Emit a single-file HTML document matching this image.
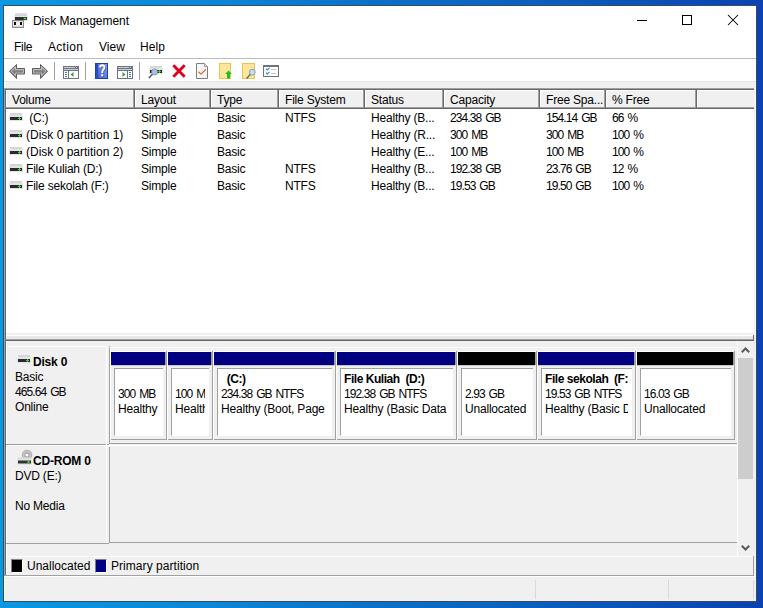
<!DOCTYPE html>
<html><head><meta charset="utf-8">
<style>
html,body{margin:0;padding:0;}
body{width:763px;height:608px;overflow:hidden;position:relative;
 background:linear-gradient(90deg,#0899e2 0%,#0a86d9 28%,#0a70c9 50%,#0a58bb 78%,#0a42b1 100%);
 font-family:"Liberation Sans",sans-serif;font-size:12px;color:#000;}
.a{position:absolute;}
.t{position:absolute;white-space:pre;line-height:15px;letter-spacing:-0.2px;}
.n{letter-spacing:-0.9px;word-spacing:1.4px;}
.b{font-weight:bold;}
.bl{letter-spacing:-0.45px;}
svg{position:absolute;overflow:visible;}
.clip{position:absolute;overflow:hidden;}
</style></head><body>
<div class="a" style="left:3px;top:5px;width:752px;height:595px;border:1px solid rgba(12,32,60,0.8);background:#f0f0f0;"></div>
<div class="a" style="left:4px;top:6px;width:752px;height:52px;background:#fff;"></div>
<div class="t" style="left:33px;top:14px;letter-spacing:-0.05px;">Disk Management</div>
<div class="t" style="left:14px;top:40px;letter-spacing:-0.3px;">File</div>
<div class="t" style="left:48px;top:40px;letter-spacing:0.3px;">Action</div>
<div class="t" style="left:99px;top:40px;letter-spacing:0;">View</div>
<div class="t" style="left:140px;top:40px;letter-spacing:0.1px;">Help</div>
<svg style="left:12px;top:13px" width="16" height="15" viewBox="0 0 16 15">
<defs><linearGradient id="gt" x1="0" y1="0" x2="0" y2="1"><stop offset="0" stop-color="#e2e3e6"/><stop offset="1" stop-color="#c9cbcf"/></linearGradient>
<linearGradient id="gb" x1="0" y1="0" x2="0" y2="1"><stop offset="0" stop-color="#d6d6d6"/><stop offset="0.5" stop-color="#f4f4f4"/><stop offset="1" stop-color="#cfcfcf"/></linearGradient></defs>
<rect x="3" y="0" width="12" height="4" rx="1" fill="url(#gt)"/>
<rect x="2" y="3" width="14" height="5" fill="#e4e6ea"/>
<rect x="3" y="4" width="12" height="3" fill="#2e2e2e"/>
<rect x="12" y="5" width="2" height="1" fill="#3cf03c"/><rect x="11.5" y="4.5" width="3" height="2" fill="#3cf03c" opacity="0.45"/>
<rect x="0.5" y="7.5" width="11" height="7" fill="url(#gb)" stroke="#8a8a8a"/>
<rect x="2" y="9" width="2" height="3" fill="#111"/><rect x="8" y="9" width="2" height="3" fill="#111"/>
</svg>
<div class="a" style="left:637px;top:20px;width:10px;height:1px;background:#000;"></div>
<div class="a" style="left:682px;top:15px;width:8px;height:8px;border:1px solid #000;"></div>
<svg style="left:728px;top:15px" width="10" height="10" viewBox="0 0 10 10"><path d="M0 0L10 10M10 0L0 10" stroke="#000" stroke-width="1.05"/></svg>
<div class="a" style="left:4px;top:58px;width:752px;height:1px;background:#bcbcbc;"></div>
<div class="a" style="left:4px;top:59px;width:752px;height:22px;background:#fff;"></div>
<div class="a" style="left:4px;top:81px;width:752px;height:1px;background:#e3e3e3;"></div>
<div class="a" style="left:4px;top:82px;width:1px;height:6px;background:#fff;"></div>
<div class="a" style="left:54px;top:62px;width:1px;height:18px;background:#a0a0a0;"></div>
<div class="a" style="left:85px;top:62px;width:1px;height:18px;background:#a0a0a0;"></div>
<div class="a" style="left:139px;top:62px;width:1px;height:18px;background:#a0a0a0;"></div>
<svg style="left:8px;top:63px" width="18" height="17" viewBox="0 0 18 17">
<defs><linearGradient id="ga" x1="0" y1="0" x2="0" y2="1"><stop offset="0" stop-color="#a8a8a8"/><stop offset="0.6" stop-color="#7c7c7c"/><stop offset="1" stop-color="#9a9a9a"/></linearGradient></defs>
<path d="M1.5 8.2L8.5 1.5V5.5H16.5V11H8.5V15.5Z" fill="url(#ga)" stroke="#5e5e5e" stroke-width="1" stroke-linejoin="round"/>
<path d="M3 8.2L7.5 3.9V6.5H15.5V10H7.5V12.6Z" fill="none" stroke="#e8e8e8" stroke-width="0.7" opacity="0.8"/>
</svg>
<svg style="left:31px;top:63px" width="18" height="17" viewBox="0 0 18 17">
<path d="M16.5 8.2L9.5 1.5V5.5H1.5V11H9.5V15.5Z" fill="url(#ga)" stroke="#5e5e5e" stroke-width="1" stroke-linejoin="round"/>
<path d="M15 8.2L10.5 3.9V6.5H2.5V10H10.5V12.6Z" fill="none" stroke="#e8e8e8" stroke-width="0.7" opacity="0.8"/>
</svg>
<svg style="left:63px;top:66px" width="16" height="13" viewBox="0 0 16 13"><rect x="0.5" y="0.5" width="15" height="12" fill="#fff" stroke="#6d7480"/><rect x="1" y="1" width="14" height="1" fill="#c9ced6"/><rect x="1" y="2" width="14" height="1" fill="#6d7480"/><rect x="1" y="3" width="14" height="1" fill="#c9ced6"/><rect x="1" y="4" width="14" height="1" fill="#6d7480"/><rect x="12" y="1" width="1" height="1" fill="#6d7480"/><rect x="14" y="1" width="1" height="1" fill="#6d7480"/><rect x="5" y="5" width="1" height="7" fill="#6d7480"/><rect x="2" y="6" width="2" height="1" fill="#3b78c8"/><rect x="2" y="8" width="2" height="1" fill="#3b78c8"/><rect x="2" y="10" width="2" height="1" fill="#3b78c8"/><path d="M7.5 8.5L10.5 6V11Z" fill="#2fa52f"/></svg>
<svg style="left:117px;top:66px" width="16" height="13" viewBox="0 0 16 13"><rect x="0.5" y="0.5" width="15" height="12" fill="#fff" stroke="#6d7480"/><rect x="1" y="1" width="14" height="1" fill="#c9ced6"/><rect x="1" y="2" width="14" height="1" fill="#6d7480"/><rect x="1" y="3" width="14" height="1" fill="#c9ced6"/><rect x="1" y="4" width="14" height="1" fill="#6d7480"/><rect x="12" y="1" width="1" height="1" fill="#6d7480"/><rect x="14" y="1" width="1" height="1" fill="#6d7480"/><rect x="10" y="5" width="1" height="7" fill="#6d7480"/><rect x="12" y="6" width="2" height="1" fill="#3b78c8"/><rect x="12" y="8" width="2" height="1" fill="#3b78c8"/><rect x="12" y="10" width="2" height="1" fill="#3b78c8"/><path d="M8.5 8.5L5.5 6V11Z" fill="#2fa52f"/></svg>
<svg style="left:95px;top:63px" width="13" height="16" viewBox="0 0 13 16">
<defs><linearGradient id="gh" x1="1" y1="0" x2="0" y2="1"><stop offset="0" stop-color="#7f9bea"/><stop offset="1" stop-color="#4466cc"/></linearGradient></defs>
<rect x="0" y="0" width="13" height="16" fill="#2140b0"/>
<rect x="3" y="1" width="9" height="14" fill="url(#gh)"/>
<rect x="1" y="1" width="2" height="14" fill="#2a4cc0"/>
<path d="M5.6 5Q5.8 2.8 7.9 2.8Q10.2 2.9 10 5Q9.8 6.6 8.6 7.6Q7.8 8.4 7.8 10.4" fill="none" stroke="#22347a" stroke-width="1.9" opacity="0.55"/>
<path d="M4.9 4.5Q5.2 2.2 7.3 2.2Q9.6 2.3 9.4 4.5Q9.2 6.1 8 7.1Q7.2 7.9 7.2 9.9" fill="none" stroke="#fff" stroke-width="1.9"/>
<rect x="6.8" y="11.8" width="2" height="2" fill="#22347a" opacity="0.55"/>
<rect x="6.1" y="11.2" width="2.1" height="2.1" fill="#fff"/>
</svg>
<svg style="left:148px;top:66px" width="16" height="13" viewBox="0 0 16 13">
<rect x="2" y="0" width="12" height="3" fill="#d6d8dc"/>
<rect x="1" y="2" width="14" height="6" fill="#e2e4e8"/>
<rect x="2" y="4" width="12" height="3" fill="#2a2a2a"/>
<rect x="10" y="5" width="3" height="1" fill="#3ae03a"/><rect x="11" y="4" width="1" height="3" fill="#3ae03a"/>
<circle cx="6.5" cy="6" r="3" fill="#a9c3dc" stroke="#6f8aa3" stroke-width="0.8"/>
<path d="M4.4 8.3L0.8 12" stroke="#4a5a6a" stroke-width="1.6"/>
</svg>
<svg style="left:172px;top:64px" width="14" height="14" viewBox="0 0 14 14">
<path d="M1.3 1.3L12.7 12.7M12.7 1.3L1.3 12.7" stroke="#e0001b" stroke-width="2.9"/>
</svg>
<svg style="left:196px;top:63px" width="12" height="16" viewBox="0 0 12 16">
<path d="M0.5 0.5H8.5L11.5 3.5V15.5H0.5Z" fill="#f6f7f8" stroke="#7d7d7d"/>
<path d="M8.5 0.5V3.5H11.5" fill="#e8e8e8" stroke="#9a9a9a"/>
<path d="M2.5 8.8L5 11.2L10 6.3" fill="none" stroke="#f06a25" stroke-width="1.3"/>
</svg>
<svg style="left:219px;top:63px" width="14" height="16" viewBox="0 0 14 16">
<rect x="0.5" y="0.5" width="11" height="15" fill="#fde69c" stroke="#e8c54c"/>
<path d="M9.5 7.5L13 11H11V15.5H8V11H6Z" fill="#20c020"/>
</svg>
<svg style="left:242px;top:63px" width="14" height="16" viewBox="0 0 14 16">
<rect x="0.5" y="0.5" width="12" height="15" fill="#fde69c" stroke="#e8c54c"/>
<circle cx="10.3" cy="9.2" r="2.9" fill="#c5def0" stroke="#7c96ae" stroke-width="0.9"/>
<path d="M8.2 11.5L4.6 15.5" stroke="#5a6a7a" stroke-width="1.3"/>
</svg>
<svg style="left:263px;top:65px" width="16" height="12" viewBox="0 0 16 12">
<rect x="0.5" y="0.5" width="15" height="11" fill="#fff" stroke="#707478"/>
<rect x="0" y="0" width="16" height="2" fill="#707478"/>
<path d="M3 3.8L4.3 5L6.5 2.8M3 7.8L4.3 9L6.5 6.8" fill="none" stroke="#2f8ae0" stroke-width="1.2"/>
<rect x="8" y="4" width="5" height="1" fill="#c4c4c4"/><rect x="8" y="8" width="5" height="1" fill="#c4c4c4"/>
</svg>
<div class="a" style="left:4px;top:88px;width:752px;height:247px;background:#fff;"></div>
<div class="a" style="left:4px;top:88px;width:751px;height:1px;background:#a0a0a0;"></div>
<div class="a" style="left:5px;top:89px;width:749px;height:1px;background:#696969;"></div>
<div class="a" style="left:6px;top:333px;width:748px;height:1px;background:#f0f0f0;"></div>
<div class="a" style="left:754px;top:89px;width:1px;height:245px;background:#f0f0f0;"></div>
<div class="a" style="left:6px;top:90px;width:748px;height:19px;background:#f0f0f0;"></div>
<div class="a" style="left:6px;top:90px;width:129px;height:19px;border-left:1px solid #fff;border-top:1px solid #fff;box-sizing:border-box;"></div>
<div class="a" style="left:6px;top:107px;width:129px;height:1px;background:#a0a0a0;"></div>
<div class="a" style="left:6px;top:108px;width:129px;height:1px;background:#696969;"></div>
<div class="a" style="left:133px;top:90px;width:1px;height:18px;background:#a0a0a0;"></div>
<div class="a" style="left:134px;top:90px;width:1px;height:19px;background:#696969;"></div>
<div class="t" style="left:12px;top:93px;">Volume</div>
<div class="a" style="left:135px;top:90px;width:76px;height:19px;border-left:1px solid #fff;border-top:1px solid #fff;box-sizing:border-box;"></div>
<div class="a" style="left:135px;top:107px;width:76px;height:1px;background:#a0a0a0;"></div>
<div class="a" style="left:135px;top:108px;width:76px;height:1px;background:#696969;"></div>
<div class="a" style="left:209px;top:90px;width:1px;height:18px;background:#a0a0a0;"></div>
<div class="a" style="left:210px;top:90px;width:1px;height:19px;background:#696969;"></div>
<div class="t" style="left:141px;top:93px;">Layout</div>
<div class="a" style="left:211px;top:90px;width:68px;height:19px;border-left:1px solid #fff;border-top:1px solid #fff;box-sizing:border-box;"></div>
<div class="a" style="left:211px;top:107px;width:68px;height:1px;background:#a0a0a0;"></div>
<div class="a" style="left:211px;top:108px;width:68px;height:1px;background:#696969;"></div>
<div class="a" style="left:277px;top:90px;width:1px;height:18px;background:#a0a0a0;"></div>
<div class="a" style="left:278px;top:90px;width:1px;height:19px;background:#696969;"></div>
<div class="t" style="left:217px;top:93px;">Type</div>
<div class="a" style="left:279px;top:90px;width:86px;height:19px;border-left:1px solid #fff;border-top:1px solid #fff;box-sizing:border-box;"></div>
<div class="a" style="left:279px;top:107px;width:86px;height:1px;background:#a0a0a0;"></div>
<div class="a" style="left:279px;top:108px;width:86px;height:1px;background:#696969;"></div>
<div class="a" style="left:363px;top:90px;width:1px;height:18px;background:#a0a0a0;"></div>
<div class="a" style="left:364px;top:90px;width:1px;height:19px;background:#696969;"></div>
<div class="t" style="left:285px;top:93px;">File System</div>
<div class="a" style="left:365px;top:90px;width:79px;height:19px;border-left:1px solid #fff;border-top:1px solid #fff;box-sizing:border-box;"></div>
<div class="a" style="left:365px;top:107px;width:79px;height:1px;background:#a0a0a0;"></div>
<div class="a" style="left:365px;top:108px;width:79px;height:1px;background:#696969;"></div>
<div class="a" style="left:442px;top:90px;width:1px;height:18px;background:#a0a0a0;"></div>
<div class="a" style="left:443px;top:90px;width:1px;height:19px;background:#696969;"></div>
<div class="t" style="left:371px;top:93px;">Status</div>
<div class="a" style="left:444px;top:90px;width:96px;height:19px;border-left:1px solid #fff;border-top:1px solid #fff;box-sizing:border-box;"></div>
<div class="a" style="left:444px;top:107px;width:96px;height:1px;background:#a0a0a0;"></div>
<div class="a" style="left:444px;top:108px;width:96px;height:1px;background:#696969;"></div>
<div class="a" style="left:538px;top:90px;width:1px;height:18px;background:#a0a0a0;"></div>
<div class="a" style="left:539px;top:90px;width:1px;height:19px;background:#696969;"></div>
<div class="t" style="left:450px;top:93px;">Capacity</div>
<div class="a" style="left:540px;top:90px;width:66px;height:19px;border-left:1px solid #fff;border-top:1px solid #fff;box-sizing:border-box;"></div>
<div class="a" style="left:540px;top:107px;width:66px;height:1px;background:#a0a0a0;"></div>
<div class="a" style="left:540px;top:108px;width:66px;height:1px;background:#696969;"></div>
<div class="a" style="left:604px;top:90px;width:1px;height:18px;background:#a0a0a0;"></div>
<div class="a" style="left:605px;top:90px;width:1px;height:19px;background:#696969;"></div>
<div class="t" style="left:546px;top:93px;">Free Spa...</div>
<div class="a" style="left:606px;top:90px;width:91px;height:19px;border-left:1px solid #fff;border-top:1px solid #fff;box-sizing:border-box;"></div>
<div class="a" style="left:606px;top:107px;width:91px;height:1px;background:#a0a0a0;"></div>
<div class="a" style="left:606px;top:108px;width:91px;height:1px;background:#696969;"></div>
<div class="a" style="left:695px;top:90px;width:1px;height:18px;background:#a0a0a0;"></div>
<div class="a" style="left:696px;top:90px;width:1px;height:19px;background:#696969;"></div>
<div class="t" style="left:612px;top:93px;">% Free</div>
<div class="a" style="left:697px;top:90px;width:57px;height:19px;border-left:1px solid #fff;border-top:1px solid #fff;box-sizing:border-box;"></div>
<div class="a" style="left:697px;top:107px;width:57px;height:1px;background:#a0a0a0;"></div>
<div class="a" style="left:697px;top:108px;width:57px;height:1px;background:#696969;"></div>
<div class="a" style="left:754px;top:88px;width:2px;height:21px;background:#f0f0f0;"></div>
<div class="a" style="left:755px;top:88px;width:1px;height:247px;background:#fff;"></div>
<svg style="left:9px;top:113px" width="14" height="8" viewBox="0 0 14 8">
<rect x="1" y="0" width="12" height="2" fill="#d4d6da"/>
<rect x="0" y="2" width="14" height="6" fill="#e2e4e8"/>
<rect x="1" y="4" width="12" height="3" fill="#2b2b2b"/>
<rect x="9" y="5" width="3" height="1" fill="#36dd36"/><rect x="10" y="4" width="1" height="3" fill="#36dd36"/>
</svg>
<div class="t" style="left:26px;top:111px;"> (C:)</div>
<div class="t" style="left:141px;top:111px;">Simple</div>
<div class="t" style="left:217px;top:111px;">Basic</div>
<div class="t" style="left:285px;top:111px;">NTFS</div>
<div class="t" style="left:371px;top:111px;">Healthy (B...</div>
<div class="t n" style="left:450px;top:111px;">234.38 GB</div>
<div class="t n" style="left:546px;top:111px;">154.14 GB</div>
<div class="t n" style="left:612px;top:111px;">66 %</div>
<svg style="left:9px;top:130px" width="14" height="8" viewBox="0 0 14 8">
<rect x="1" y="0" width="12" height="2" fill="#d4d6da"/>
<rect x="0" y="2" width="14" height="6" fill="#e2e4e8"/>
<rect x="1" y="4" width="12" height="3" fill="#2b2b2b"/>
<rect x="9" y="5" width="3" height="1" fill="#36dd36"/><rect x="10" y="4" width="1" height="3" fill="#36dd36"/>
</svg>
<div class="t" style="left:26px;top:128px;letter-spacing:0;">(Disk 0 partition 1)</div>
<div class="t" style="left:141px;top:128px;">Simple</div>
<div class="t" style="left:217px;top:128px;">Basic</div>
<div class="t" style="left:371px;top:128px;">Healthy (R...</div>
<div class="t n" style="left:450px;top:128px;">300 MB</div>
<div class="t n" style="left:546px;top:128px;">300 MB</div>
<div class="t n" style="left:612px;top:128px;">100 %</div>
<svg style="left:9px;top:147px" width="14" height="8" viewBox="0 0 14 8">
<rect x="1" y="0" width="12" height="2" fill="#d4d6da"/>
<rect x="0" y="2" width="14" height="6" fill="#e2e4e8"/>
<rect x="1" y="4" width="12" height="3" fill="#2b2b2b"/>
<rect x="9" y="5" width="3" height="1" fill="#36dd36"/><rect x="10" y="4" width="1" height="3" fill="#36dd36"/>
</svg>
<div class="t" style="left:26px;top:145px;letter-spacing:0;">(Disk 0 partition 2)</div>
<div class="t" style="left:141px;top:145px;">Simple</div>
<div class="t" style="left:217px;top:145px;">Basic</div>
<div class="t" style="left:371px;top:145px;">Healthy (E...</div>
<div class="t n" style="left:450px;top:145px;">100 MB</div>
<div class="t n" style="left:546px;top:145px;">100 MB</div>
<div class="t n" style="left:612px;top:145px;">100 %</div>
<svg style="left:9px;top:164px" width="14" height="8" viewBox="0 0 14 8">
<rect x="1" y="0" width="12" height="2" fill="#d4d6da"/>
<rect x="0" y="2" width="14" height="6" fill="#e2e4e8"/>
<rect x="1" y="4" width="12" height="3" fill="#2b2b2b"/>
<rect x="9" y="5" width="3" height="1" fill="#36dd36"/><rect x="10" y="4" width="1" height="3" fill="#36dd36"/>
</svg>
<div class="t" style="left:26px;top:162px;">File Kuliah (D:)</div>
<div class="t" style="left:141px;top:162px;">Simple</div>
<div class="t" style="left:217px;top:162px;">Basic</div>
<div class="t" style="left:285px;top:162px;">NTFS</div>
<div class="t" style="left:371px;top:162px;">Healthy (B...</div>
<div class="t n" style="left:450px;top:162px;">192.38 GB</div>
<div class="t n" style="left:546px;top:162px;">23.76 GB</div>
<div class="t n" style="left:612px;top:162px;">12 %</div>
<svg style="left:9px;top:181px" width="14" height="8" viewBox="0 0 14 8">
<rect x="1" y="0" width="12" height="2" fill="#d4d6da"/>
<rect x="0" y="2" width="14" height="6" fill="#e2e4e8"/>
<rect x="1" y="4" width="12" height="3" fill="#2b2b2b"/>
<rect x="9" y="5" width="3" height="1" fill="#36dd36"/><rect x="10" y="4" width="1" height="3" fill="#36dd36"/>
</svg>
<div class="t" style="left:26px;top:179px;">File sekolah (F:)</div>
<div class="t" style="left:141px;top:179px;">Simple</div>
<div class="t" style="left:217px;top:179px;">Basic</div>
<div class="t" style="left:285px;top:179px;">NTFS</div>
<div class="t" style="left:371px;top:179px;">Healthy (B...</div>
<div class="t n" style="left:450px;top:179px;">19.53 GB</div>
<div class="t n" style="left:546px;top:179px;">19.50 GB</div>
<div class="t n" style="left:612px;top:179px;">100 %</div>
<div class="a" style="left:6px;top:333px;width:748px;height:2px;background:#f0f0f0;"></div>
<div class="a" style="left:6px;top:335px;width:748px;height:1px;background:#fff;"></div>
<div class="a" style="left:6px;top:336px;width:748px;height:3px;background:#e8e8e8;"></div>
<div class="a" style="left:6px;top:339px;width:748px;height:1px;background:#a0a0a0;"></div>
<div class="a" style="left:6px;top:340px;width:748px;height:1px;background:#696969;"></div>
<div class="a" style="left:753px;top:335px;width:1px;height:6px;background:#696969;"></div>
<div class="a" style="left:4px;top:88px;width:1px;height:488px;background:#a0a0a0;"></div>
<div class="a" style="left:5px;top:89px;width:1px;height:487px;background:#696969;"></div>
<div class="a" style="left:6px;top:341px;width:748px;height:234px;background:#f0f0f0;"></div>
<div class="a" style="left:6px;top:341px;width:1px;height:235px;background:#fff;"></div>
<div class="a" style="left:6px;top:346px;width:101px;height:1px;background:#fff;"></div>
<div class="a" style="left:106px;top:346px;width:1px;height:98px;background:#fff;"></div>
<div class="a" style="left:109px;top:346px;width:1px;height:1px;background:#a0a0a0;"></div>
<div class="a" style="left:109px;top:348px;width:1px;height:96px;background:#a0a0a0;"></div>
<div class="a" style="left:110px;top:347px;width:628px;height:1px;background:#fff;"></div>
<div class="a" style="left:110px;top:347px;width:1px;height:93px;background:#fff;"></div>
<div class="a" style="left:110px;top:439px;width:625px;height:1px;background:#a0a0a0;"></div>
<div class="a" style="left:6px;top:444px;width:103px;height:1px;background:#a0a0a0;"></div>
<div class="a" style="left:109px;top:443px;width:628px;height:1px;background:#a0a0a0;"></div>
<div class="a" style="left:6px;top:445px;width:731px;height:1px;background:#fff;"></div>
<svg style="left:17px;top:355px" width="14" height="8" viewBox="0 0 14 8">
<rect x="1" y="0" width="12" height="2" fill="#d4d6da"/>
<rect x="0" y="2" width="14" height="6" fill="#e2e4e8"/>
<rect x="1" y="4" width="12" height="3" fill="#2b2b2b"/>
<rect x="9" y="5" width="3" height="1" fill="#36dd36"/><rect x="10" y="4" width="1" height="3" fill="#36dd36"/>
</svg>
<div class="t b" style="left:33px;top:355px;">Disk 0</div>
<div class="t" style="left:15px;top:370px;">Basic</div>
<div class="t n" style="left:15px;top:385px;">465.64 GB</div>
<div class="t" style="left:15px;top:400px;">Online</div>
<div class="a" style="left:110px;top:351px;width:56px;height:1px;background:#fff;"></div>
<div class="a" style="left:110px;top:351px;width:1px;height:89px;background:#fff;"></div>
<div class="a" style="left:111px;top:352px;width:54px;height:13px;background:#000080;"></div>
<div class="a" style="left:165px;top:352px;width:1px;height:13px;background:#a0a0a0;"></div>
<div class="a" style="left:166px;top:351px;width:1px;height:89px;background:#a0a0a0;"></div>
<div class="a" style="left:111px;top:365px;width:54px;height:1px;background:#c8c6be;"></div>
<div class="a" style="left:114px;top:368px;width:49px;height:68px;background:#fff;border-top:1px solid #a0a0a0;border-left:1px solid #a0a0a0;border-bottom:1px solid #fff;box-sizing:border-box;"></div>
<div class="clip" style="left:115px;top:369px;width:44px;height:66px;">
<div class="t n" style="left:3px;top:18px;">300 MB</div>
<div class="t" style="left:3px;top:33px;">Healthy</div>
</div>
<div class="a" style="left:167px;top:351px;width:45px;height:1px;background:#fff;"></div>
<div class="a" style="left:167px;top:351px;width:1px;height:89px;background:#fff;"></div>
<div class="a" style="left:168px;top:352px;width:43px;height:13px;background:#000080;"></div>
<div class="a" style="left:211px;top:352px;width:1px;height:13px;background:#a0a0a0;"></div>
<div class="a" style="left:212px;top:351px;width:1px;height:89px;background:#a0a0a0;"></div>
<div class="a" style="left:168px;top:365px;width:43px;height:1px;background:#c8c6be;"></div>
<div class="a" style="left:171px;top:368px;width:38px;height:68px;background:#fff;border-top:1px solid #a0a0a0;border-left:1px solid #a0a0a0;border-bottom:1px solid #fff;box-sizing:border-box;"></div>
<div class="clip" style="left:172px;top:369px;width:33px;height:66px;">
<div class="t n" style="left:3px;top:18px;">100 MB</div>
<div class="t" style="left:3px;top:33px;">Healthy</div>
</div>
<div class="a" style="left:213px;top:351px;width:122px;height:1px;background:#fff;"></div>
<div class="a" style="left:213px;top:351px;width:1px;height:89px;background:#fff;"></div>
<div class="a" style="left:214px;top:352px;width:120px;height:13px;background:#000080;"></div>
<div class="a" style="left:334px;top:352px;width:1px;height:13px;background:#a0a0a0;"></div>
<div class="a" style="left:335px;top:351px;width:1px;height:89px;background:#a0a0a0;"></div>
<div class="a" style="left:214px;top:365px;width:120px;height:1px;background:#c8c6be;"></div>
<div class="a" style="left:217px;top:368px;width:115px;height:68px;background:#fff;border-top:1px solid #a0a0a0;border-left:1px solid #a0a0a0;border-bottom:1px solid #fff;box-sizing:border-box;"></div>
<div class="clip" style="left:218px;top:369px;width:110px;height:66px;">
<div class="t b bl" style="left:3px;top:3px;">  (C:)</div>
<div class="t n" style="left:3px;top:18px;">234.38 GB NTFS</div>
<div class="t" style="left:3px;top:33px;">Healthy (Boot, Page</div>
</div>
<div class="a" style="left:336px;top:351px;width:120px;height:1px;background:#fff;"></div>
<div class="a" style="left:336px;top:351px;width:1px;height:89px;background:#fff;"></div>
<div class="a" style="left:337px;top:352px;width:118px;height:13px;background:#000080;"></div>
<div class="a" style="left:455px;top:352px;width:1px;height:13px;background:#a0a0a0;"></div>
<div class="a" style="left:456px;top:351px;width:1px;height:89px;background:#a0a0a0;"></div>
<div class="a" style="left:337px;top:365px;width:118px;height:1px;background:#c8c6be;"></div>
<div class="a" style="left:340px;top:368px;width:113px;height:68px;background:#fff;border-top:1px solid #a0a0a0;border-left:1px solid #a0a0a0;border-bottom:1px solid #fff;box-sizing:border-box;"></div>
<div class="clip" style="left:341px;top:369px;width:108px;height:66px;">
<div class="t b bl" style="left:3px;top:3px;">File Kuliah  (D:)</div>
<div class="t n" style="left:3px;top:18px;">192.38 GB NTFS</div>
<div class="t" style="left:3px;top:33px;">Healthy (Basic Data</div>
</div>
<div class="a" style="left:457px;top:351px;width:79px;height:1px;background:#fff;"></div>
<div class="a" style="left:457px;top:351px;width:1px;height:89px;background:#fff;"></div>
<div class="a" style="left:458px;top:352px;width:77px;height:13px;background:#000000;"></div>
<div class="a" style="left:535px;top:352px;width:1px;height:13px;background:#a0a0a0;"></div>
<div class="a" style="left:536px;top:351px;width:1px;height:89px;background:#a0a0a0;"></div>
<div class="a" style="left:458px;top:365px;width:77px;height:1px;background:#c8c6be;"></div>
<div class="a" style="left:461px;top:368px;width:72px;height:68px;background:#fff;border-top:1px solid #a0a0a0;border-left:1px solid #a0a0a0;border-bottom:1px solid #fff;box-sizing:border-box;"></div>
<div class="clip" style="left:462px;top:369px;width:67px;height:66px;">
<div class="t n" style="left:3px;top:18px;">2.93 GB</div>
<div class="t" style="left:3px;top:33px;">Unallocated</div>
</div>
<div class="a" style="left:537px;top:351px;width:98px;height:1px;background:#fff;"></div>
<div class="a" style="left:537px;top:351px;width:1px;height:89px;background:#fff;"></div>
<div class="a" style="left:538px;top:352px;width:96px;height:13px;background:#000080;"></div>
<div class="a" style="left:634px;top:352px;width:1px;height:13px;background:#a0a0a0;"></div>
<div class="a" style="left:635px;top:351px;width:1px;height:89px;background:#a0a0a0;"></div>
<div class="a" style="left:538px;top:365px;width:96px;height:1px;background:#c8c6be;"></div>
<div class="a" style="left:541px;top:368px;width:91px;height:68px;background:#fff;border-top:1px solid #a0a0a0;border-left:1px solid #a0a0a0;border-bottom:1px solid #fff;box-sizing:border-box;"></div>
<div class="clip" style="left:542px;top:369px;width:86px;height:66px;">
<div class="t b bl" style="left:3px;top:3px;">File sekolah  (F:)</div>
<div class="t n" style="left:3px;top:18px;">19.53 GB NTFS</div>
<div class="t" style="left:3px;top:33px;">Healthy (Basic Data</div>
</div>
<div class="a" style="left:636px;top:351px;width:98px;height:1px;background:#fff;"></div>
<div class="a" style="left:636px;top:351px;width:1px;height:89px;background:#fff;"></div>
<div class="a" style="left:637px;top:352px;width:96px;height:13px;background:#000000;"></div>
<div class="a" style="left:733px;top:352px;width:1px;height:13px;background:#a0a0a0;"></div>
<div class="a" style="left:734px;top:351px;width:1px;height:89px;background:#a0a0a0;"></div>
<div class="a" style="left:637px;top:365px;width:96px;height:1px;background:#c8c6be;"></div>
<div class="a" style="left:640px;top:368px;width:91px;height:68px;background:#fff;border-top:1px solid #a0a0a0;border-left:1px solid #a0a0a0;border-bottom:1px solid #fff;box-sizing:border-box;"></div>
<div class="clip" style="left:641px;top:369px;width:86px;height:66px;">
<div class="t n" style="left:3px;top:18px;">16.03 GB</div>
<div class="t" style="left:3px;top:33px;">Unallocated</div>
</div>
<div class="a" style="left:6px;top:445px;width:1px;height:98px;background:#fff;"></div>
<div class="a" style="left:106px;top:444px;width:1px;height:99px;background:#fff;"></div>
<div class="a" style="left:109px;top:447px;width:1px;height:96px;background:#a0a0a0;"></div>
<div class="a" style="left:6px;top:543px;width:103px;height:1px;background:#a0a0a0;"></div>
<div class="a" style="left:109px;top:542px;width:628px;height:1px;background:#a0a0a0;"></div>
<svg style="left:17px;top:449px" width="15" height="16" viewBox="0 0 15 16">
<circle cx="10" cy="6" r="4.8" fill="#c4c4c4" stroke="#b0b0b0" stroke-width="1"/>
<circle cx="10" cy="6" r="2.5" fill="#9a9a9a"/>
<circle cx="10" cy="6" r="1.6" fill="#fff"/>
<rect x="1" y="8.5" width="13" height="3" fill="#d8dadd"/>
<rect x="0" y="10" width="15" height="6" fill="#e2e4e8"/>
<rect x="1" y="11.5" width="13" height="3" fill="#333"/>
<rect x="10" y="12.5" width="3" height="1" fill="#36dd36"/><rect x="11" y="11.5" width="1" height="3" fill="#36dd36"/>
</svg>
<div class="t b" style="left:33px;top:454px;">CD-ROM 0</div>
<div class="t" style="left:15px;top:469px;">DVD (E:)</div>
<div class="t" style="left:15px;top:499px;">No Media</div>
<div class="a" style="left:738px;top:341px;width:16px;height:215px;background:#f0f0f0;"></div>
<div class="a" style="left:737px;top:341px;width:1px;height:215px;background:#fff;"></div>
<div class="a" style="left:738px;top:358px;width:15px;height:121px;background:#cdcdcd;"></div>
<svg style="left:741px;top:347px" width="9" height="6" viewBox="0 0 9 6"><path d="M0.8 5.2L4.5 1.5L8.2 5.2" fill="none" stroke="#5a5a5a" stroke-width="2"/></svg>
<svg style="left:741px;top:545px" width="9" height="6" viewBox="0 0 9 6"><path d="M0.8 0.8L4.5 4.5L8.2 0.8" fill="none" stroke="#5a5a5a" stroke-width="2"/></svg>
<div class="a" style="left:6px;top:556px;width:748px;height:1px;background:#fff;"></div>
<div class="a" style="left:753px;top:556px;width:1px;height:20px;background:#a0a0a0;"></div>
<div class="a" style="left:4px;top:575px;width:750px;height:1px;background:#a0a0a0;"></div>
<div class="a" style="left:11px;top:559px;width:12px;height:14px;background:#000;border-top:1px solid #808080;border-left:1px solid #808080;border-right:1px solid #fff;border-bottom:1px solid #fff;box-sizing:border-box;"></div>
<div class="t" style="left:27px;top:559px;letter-spacing:0;">Unallocated</div>
<div class="a" style="left:95px;top:559px;width:12px;height:14px;background:#000080;border-top:1px solid #808080;border-left:1px solid #808080;border-right:1px solid #fff;border-bottom:1px solid #fff;box-sizing:border-box;"></div>
<div class="t" style="left:111px;top:559px;letter-spacing:0.05px;">Primary partition</div>
<div class="a" style="left:4px;top:576px;width:752px;height:1px;background:#fff;"></div>
<div class="a" style="left:4px;top:577px;width:1px;height:24px;background:#fff;"></div>
<div class="a" style="left:535px;top:580px;width:1px;height:19px;background:#d9d9d9;"></div>
<div class="a" style="left:668px;top:580px;width:1px;height:19px;background:#d9d9d9;"></div>
<div class="a" style="left:753px;top:580px;width:1px;height:19px;background:#d9d9d9;"></div>
</body></html>
